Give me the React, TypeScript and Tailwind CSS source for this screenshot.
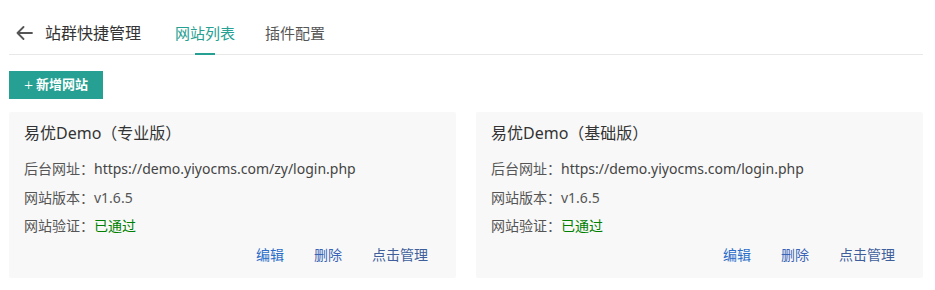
const sites = [
	{ name: "易优Demo（专业版）", url: "https://demo.yiyocms.com/zy/login.php", version: "v1.6.5" },
	{ name: "易优Demo（基础版）", url: "https://demo.yiyocms.com/login.php", version: "v1.6.5" },
];

const font = { fontFamily: '"Segoe UI", "Noto Sans", "Noto Sans CJK SC", sans-serif' };

function SiteCard({ name, url, version }: { name: string; url: string; version: string }) {
	return (
		<div className="rounded-[2px] bg-[#f8f8f8] px-[15px] pt-[9px] pb-[9px]">
			<p className="text-[16px] leading-[24px] text-[#333]">{name}</p>
			<div className="mt-[10px] text-[14px] leading-[28.5px] text-[#555]">
				<p>
					后台网址：<span className="text-[#444]">{url}</span>
				</p>
				<p>网站版本：{version}</p>
				<p>
					网站验证：<span className="text-[#008000]">已通过</span>
				</p>
			</div>
			<div className="flex justify-end gap-[30px] pr-[13px] text-[14px] leading-[28px]">
				<a className="text-[#2a6dc9]">编辑</a>
				<a className="text-[#3a64b5]">删除</a>
				<a className="text-[#3f5f9c]">点击管理</a>
			</div>
		</div>
	);
}

export default function App() {
	return (
		<div className="min-h-[290px] bg-white pl-[9px] pr-[12px]" style={font}>
			<div className="flex h-[55px] items-stretch border-b border-[#e8e8e8] pt-[12px]">
				<div className="flex items-center pl-[7px] pr-[19px]">
					<svg width="17" height="14" viewBox="0 0 17 14" fill="none" stroke="#555" strokeWidth="1.8" strokeLinecap="round" strokeLinejoin="round">
						<path d="M16 7H1.5M7.5 1L1.5 7l6 6" />
					</svg>
					<span className="ml-[12px] text-[16px] text-[#333]">站群快捷管理</span>
				</div>
				<div className="relative flex items-center px-[15px] text-[15px] text-[#26a092]">
					网站列表
					<span className="absolute bottom-[-1px] left-1/2 h-[2px] w-[20px] -translate-x-1/2 bg-[#26a092]" />
				</div>
				<div className="flex items-center px-[15px] text-[15px] text-[#555]">插件配置</div>
			</div>
			<button className="mt-[16px] flex h-[28px] w-[94px] items-center justify-center gap-[3px] bg-[#26a092] text-[13px] font-bold text-white">
				<span className="text-[16px] font-light leading-none">+</span>新增网站
			</button>
			<div className="mt-[13px] grid grid-cols-2 gap-[20px]">
				{sites.map((s) => (
					<SiteCard key={s.name} {...s} />
				))}
			</div>
		</div>
	);
}
